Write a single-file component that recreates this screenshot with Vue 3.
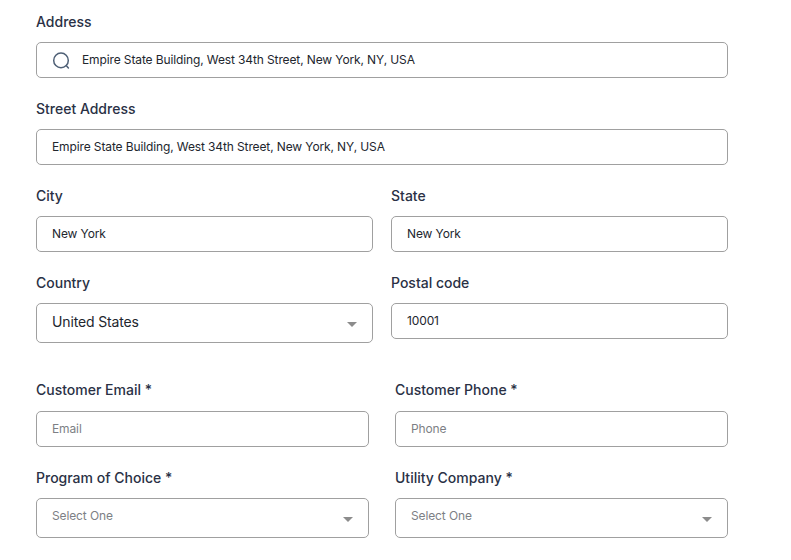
<script setup>
const topRows = [
  { label: 'City', value: 'New York' },
  { label: 'State', value: 'New York' },
]
const contactRows = [
  { label: 'Customer Email *', placeholder: 'Email' },
  { label: 'Customer Phone *', placeholder: 'Phone' },
]
const selectRows = [
  { label: 'Program of Choice *', placeholder: 'Select One' },
  { label: 'Utility Company *', placeholder: 'Select One' },
]
const address = 'Empire State Building, West 34th Street, New York, NY, USA'
</script>

<template>
  <main class="form">
    <section class="stack">
      <div class="field">
        <div class="label">Address</div>
        <div class="box search">
          <svg class="icon" width="20" height="20" viewBox="0 0 20 20" fill="none" stroke="#4f6076" stroke-width="1.5" stroke-linecap="round">
            <circle cx="10" cy="10.4" r="7.3" />
            <path d="M15.4 15.8l2 2.2" />
          </svg>
          <span>{{ address }}</span>
        </div>
      </div>
      <div class="field">
        <div class="label">Street Address</div>
        <div class="box"><span>{{ address }}</span></div>
      </div>
      <div class="grid first">
        <div class="field" v-for="r in topRows" :key="r.label">
          <div class="label">{{ r.label }}</div>
          <div class="box"><span>{{ r.value }}</span></div>
        </div>
        <div class="field">
          <div class="label">Country</div>
          <div class="box tall country">
            <span class="large">United States</span>
            <i class="caret"></i>
          </div>
        </div>
        <div class="field">
          <div class="label">Postal code</div>
          <div class="box"><span>10001</span></div>
        </div>
      </div>
    </section>

    <section class="grid second">
      <div class="field" v-for="r in contactRows" :key="r.label">
        <div class="label">{{ r.label }}</div>
        <div class="box"><span class="ph">{{ r.placeholder }}</span></div>
      </div>
      <div class="field" v-for="r in selectRows" :key="r.label">
        <div class="label short">{{ r.label }}</div>
        <div class="box tall select-one">
          <span class="ph">{{ r.placeholder }}</span>
          <i class="caret"></i>
        </div>
      </div>
    </section>
  </main>
</template>

<style scoped>
.form {
  box-sizing: border-box;
  width: 791px;
  height: 560px;
  overflow: hidden;
  padding: 12px 63px 0 36px;
  background: #fff;
  font-family: Inter, "Liberation Sans", sans-serif;
}
.stack {
  display: flex;
  flex-direction: column;
  gap: 21px;
}
.grid {
  display: grid;
  grid-template-columns: 1fr 1fr;
  align-items: start;
  row-gap: 21px;
}
.first { column-gap: 18px; }
.second { column-gap: 26px; margin-top: 37px; }
.field {
  display: flex;
  flex-direction: column;
}
.label {
  height: 20px;
  line-height: 20px;
  margin-bottom: 10px;
  font-size: 14px;
  font-weight: 500;
  color: #2a3145;
}
.second .label { margin-bottom: 11px; }
.second .label.short { margin-bottom: 10px; }
.box {
  box-sizing: border-box;
  position: relative;
  display: flex;
  align-items: center;
  height: 36px;
  padding: 0 15px 2px;
  border: 1px solid #a0a0a0;
  border-radius: 5px;
  font-size: 12px;
  letter-spacing: -0.12px;
  color: #22262e;
}
.search { padding-left: 14px; padding-bottom: 0; gap: 11px; }
.search span { position: relative; top: -1px; }
.icon { flex: none; }
.tall { height: 40px; }
.country { padding-bottom: 4px; }
.large { font-size: 14px; letter-spacing: -0.15px; }
.ph { color: #7d7f85; }
.select-one { align-items: flex-start; padding-top: 9px; }
.caret {
  position: absolute;
  right: 15px;
  top: 18px;
  width: 0;
  height: 0;
  border-left: 5px solid transparent;
  border-right: 5px solid transparent;
  border-top: 5px solid #8c8c8c;
}
</style>

<style>
html, body { margin: 0; background: #fff; }
</style>
